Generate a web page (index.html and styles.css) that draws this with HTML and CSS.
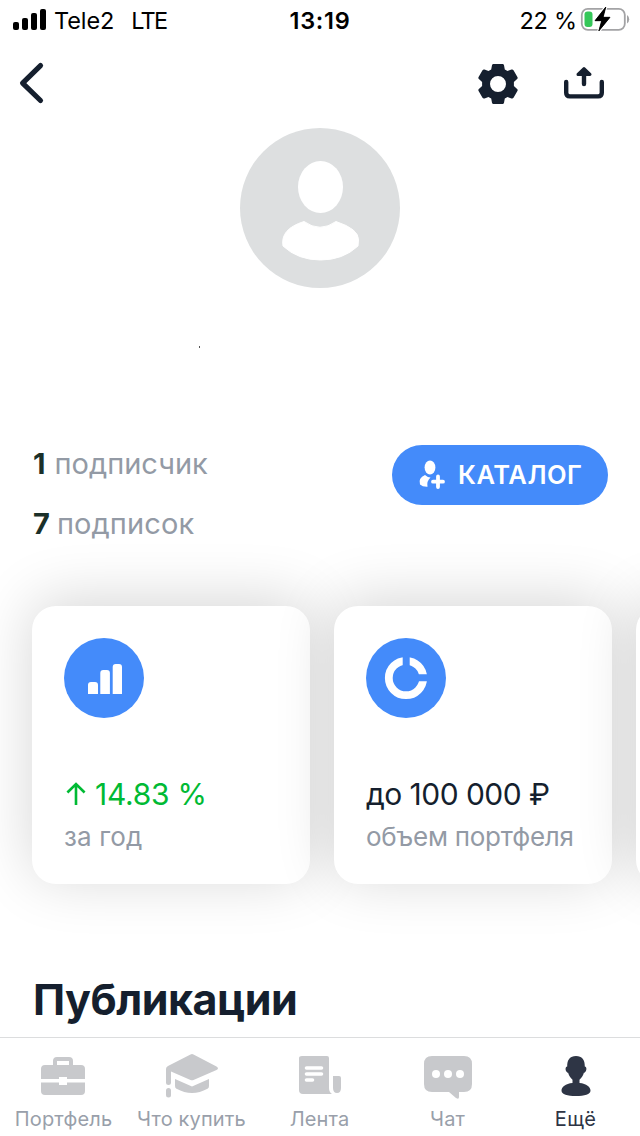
FILE: index.html
```html
<!DOCTYPE html>
<html lang="ru">
<head>
<meta charset="utf-8">
<title>Профиль</title>
<link rel="stylesheet" href="styles.css">
</head>
<body>
<div class="screen">
  <header class="status">
    <div class="status-left">
      <svg class="signal" width="34" height="22" viewBox="0 0 34 22"><rect x="0" y="14" width="6" height="8" rx="2"/><rect x="9" y="10" width="6" height="12" rx="2"/><rect x="18" y="5" width="6" height="17" rx="2"/><rect x="27" y="1" width="6" height="21" rx="2"/></svg>
      <span class="carrier">Tele2</span><span class="network">LTE</span>
    </div>
    <span class="time">13:19</span>
    <div class="status-right">
      <span class="percent">22 %</span>
      <svg class="battery" width="50" height="26" viewBox="0 0 50 26"><rect x="1.8" y="2.8" width="43" height="21" rx="6" fill="none" stroke="#a3a3a5" stroke-width="1.8"/><path d="M47 9q2.200 1.400 2.200 4.200T47 17.500z" fill="#a3a3a5"/><rect x="4.500" y="5.500" width="8" height="15.500" rx="3" fill="#35c759"/><path d="M25.800 1 15 14.700h6.700L18.800 25 30 11.300h-6.900z" fill="#000" stroke="#fff" stroke-width="3" paint-order="stroke" stroke-linejoin="round"/><path d="M25.800 1 15 14.700h6.700L18.800 25 30 11.300h-6.900z" fill="#000" stroke="#000" stroke-width=".8" stroke-linejoin="round"/></svg>
    </div>
  </header>
  <nav class="topbar">
    <svg width="26" height="42" viewBox="0 0 26 42" fill="none" stroke="#151f2e" stroke-width="5.200" stroke-linecap="round" stroke-linejoin="round"><path d="M21.500 3.600 3.600 21.200 21.500 38.500"/></svg>
    <div class="actions">
      <svg width="40" height="40" viewBox="0 0 40 40"><path fill="#151f2e" fill-rule="evenodd" d="M15.500 0h9q1.200 0 1.500 1.300l.8 4.100 2.700 1.500 4-1.400q1.300-.4 2 .7l3.900 6.900q.7 1.200-.3 2l-3.200 2.800v4.200l3.200 2.800q1 .8.3 2l-3.900 6.900q-.7 1.100-2 .7l-4-1.400-2.700 1.500-.8 4.100Q25.700 40 24.500 40h-9q-1.200 0-1.500-1.300l-.8-4.100-2.700-1.500-4 1.400q-1.300.4-2-.7L.6 26.900q-.7-1.200.3-2l3.200-2.800v-4.200L.9 15.100q-1-.8-.3-2l3.900-6.900q.7-1.100 2-.7l4 1.400 2.700-1.500.8-4.100Q14.300 0 15.500 0zM20 12a8 8 0 1 0 0 16 8 8 0 0 0 0-16z"/></svg>
      <svg width="42" height="34" viewBox="0 0 42 34" fill="none" stroke="#151f2e" stroke-width="4.400" stroke-linecap="round" stroke-linejoin="round"><path d="M3.200 16v10.800q0 3.600 3.600 3.600h28.400q3.600 0 3.600-3.600V16M21 18V6"/><path d="M21 2.700 27 8.400H15z" fill="#151f2e" stroke-width="3"/></svg>
    </div>
  </nav>
  <div class="avatar">
    <svg width="160" height="160" viewBox="0 0 160 160"><circle cx="80" cy="80" r="80" fill="#dddfe0"/><ellipse cx="80.500" cy="59" rx="22.500" ry="26" fill="#fff"/><path d="M64 93.500Q80 105 96 93.500 119 101 118.500 112L118 118Q103 132 80.500 132T43 118Q40 101 64 93.500z" fill="#fff" stroke="#fff" stroke-width="1" stroke-linejoin="round"/></svg>
  </div>
  <div class="name"><i class="tick"></i></div>
  <section class="social">
    <div class="counts">
      <div class="count"><b>1</b><span class="followers">подписчик</span></div>
      <div class="count"><b>7</b><span class="following">подписок</span></div>
    </div>
    <button class="catalog">
      <svg width="26" height="29" viewBox="0 0 26 29" fill="#fff"><ellipse cx="11" cy="7.500" rx="5.400" ry="7"/><path d="M6 15Q9 17.500 11.500 17.500 7.500 21 8.500 26.800 3.500 27 1 24.500 -1 18 6 15z"/><path d="M19 16.500v10.500M14 21.700h10" fill="none" stroke="#fff" stroke-width="3.800" stroke-linecap="round"/></svg>
      <span>КАТАЛОГ</span>
    </button>
  </section>
  <section class="cards">
    <article class="card">
      <svg width="80" height="80" viewBox="0 0 80 80"><circle cx="40" cy="40" r="40" fill="#448bfa"/><path d="M24 56V47q0-3 3-3h4q3 0 3 3v9zM36.300 56V35q0-3 3-3h3.600q3 0 3 3v21zM48.700 56V29q0-3 3-3h3.300q3 0 3 3v27z" fill="#fff"/></svg>
      <div class="value gain"><svg width="20" height="24" viewBox="0 0 20 24" fill="none" stroke="#00ba34" stroke-width="2.600"><path d="M10 23V2.500M1.400 10.500 10 2l8.600 8.500"/></svg><span class="gain-text">14.83 %</span></div>
      <div class="caption c1">за год</div>
    </article>
    <article class="card">
      <svg width="80" height="80" viewBox="0 0 80 80"><circle cx="40" cy="40" r="40" fill="#448bfa"/><circle cx="40" cy="40" r="17.200" fill="none" stroke="#fff" stroke-width="7.800"/><path d="M36.700 17h7v14h-7zM50 36.300h14v7H50z" fill="#448bfa"/></svg>
      <div class="value volume">до 100 000 ₽</div>
      <div class="caption c2">объем портфеля</div>
    </article>
    <article class="card"></article>
  </section>
  <h1 class="heading"><span>Публикации</span></h1>
  <footer class="tabs">
    <a class="tab t1"><svg width="46" height="50" viewBox="0 0 46 50"><path fill="#c8c9cc" fill-rule="evenodd" d="M13 18v-4q0-4 4-4h12q4 0 4 4v4h8q4 0 4 4v10H27v-2h-8v2H1V22q0-4 4-4zM17 18h12v-4H17zM1 35.500h18V38h8v-2.500h18V44q0 4-4 4H5q-4 0-4-4z"/></svg><span>Портфель</span></a>
    <a class="tab t2"><svg width="54" height="50" viewBox="0 0 54 50" fill="#c8c9cc"><path d="M25.500 7.500q1.500-.8 3 0L51.500 19.500q3 1.800 0 3.600L28.500 33q-1.500.7-3 0L6 24.500V36q0 2-2.500 2T1 36V22q0-2 2-3zM10 32l17 7.500L44 32v7q0 2-1.500 2.800-15.500 8.500-31 0Q10 41 10 39z"/><rect x="1" y="41" width="5" height="9.500" rx="2.500"/></svg><span>Что купить</span></a>
    <a class="tab t3"><svg width="44" height="50" viewBox="0 0 44 50"><path d="M4 9h25q2 0 2 2v30q0 4 3 6H5q-4 0-4-4V11q0-2 3-2z" fill="#c8c9cc"/><path d="M35 29h6q2 0 2 2v10q0 5-4 5t-4-5z" fill="#c8c9cc"/><path d="M8.500 21h15M8.500 27h15M8.500 33h6" fill="none" stroke="#fff" stroke-width="3.600" stroke-linecap="round"/></svg><span>Лента</span></a>
    <a class="tab t4"><svg width="48" height="50" viewBox="0 0 48 50"><path d="M8 9h32q8 0 8 8v20q0 8-8 8h-5v5q0 3-3 1l-7-6H8q-8 0-8-8V17q0-8 8-8z" fill="#c8c9cc"/><g fill="#fff"><circle cx="12" cy="27" r="4"/><circle cx="24" cy="27" r="4"/><circle cx="36" cy="27" r="4"/></g></svg><span>Чат</span></a>
    <a class="tab t5 active"><svg width="30" height="50" viewBox="0 0 30 50"><path d="M15 9c6 0 9 4 8.800 10.500 2.200.5 1.800 3.500.8 5-.5 1-1.200 1.300-1.700 1.300-1 3.200-2.400 5.200-4.400 7v3.200c7 .5 11 4 11 7.500 0 4-6 5.500-14.500 5.500S.5 47.500.5 43.500c0-3.500 4-7 11-7.500v-3.200c-2-1.800-3.400-3.800-4.400-7-.5 0-1.200-.3-1.700-1.300-1-1.500-1.400-4.500.8-5C6 13 9 9 15 9z" fill="#2e3545"/></svg><span>Ещё</span></a>
  </footer>
</div>
</body>
</html>
```
FILE: styles.css
```css
* { box-sizing: border-box; }
body { margin: 0; background: #fff; font-family: Inter, "Noto Sans", sans-serif; }
svg { display: block; flex: none; overflow: visible; }
.screen { width: 640px; height: 1136px; overflow: hidden; background: #fff; display: flex; flex-direction: column; }
.status { height: 42px; flex: none; display: grid; grid-template-columns: 1fr auto 1fr; padding: 0 10px 0 13px; font-size: 23.500px; line-height: 42px; color: #000; white-space: nowrap; }
.status-left { display: flex; }
.signal { margin: 8px 7px 0 0; }
.carrier { letter-spacing: -.1px; }
.network { margin-left: 17px; letter-spacing: -1.700px; }
.time { font-weight: 600; letter-spacing: .7px; margin-right: 3px; }
.status-right { display: flex; justify-content: flex-end; }
.percent { letter-spacing: -.2px; }
.battery { margin: 6px 0 0 3px; }
.topbar { height: 86px; flex: none; display: flex; justify-content: space-between; padding: 20px 35px 0 19px; }
.actions { display: flex; gap: 45px; padding-top: 2px; }
.actions svg + svg { margin-top: 2px; }
.avatar { height: 160px; flex: none; display: flex; justify-content: center; }
.name { height: 157px; flex: none; padding: 58px 0 0 199px; }
.tick { display: block; width: 1px; height: 2px; background: #555; }
.social { height: 161px; flex: none; display: flex; justify-content: space-between; padding: 0 32px 0 33px; }
.count { display: flex; height: 60px; line-height: 38px; font-size: 29px; color: #939aa5; }
.count b { color: #1b3029; margin-right: 7px; }
.followers { margin-left: 2px; letter-spacing: 0; }
.following { letter-spacing: .1px; }
.catalog { width: 216px; height: 60px; border: 0; border-radius: 30px; background: #448bfa; color: #fff; display: flex; align-items: center; padding: 0 0 1px 27px; font: 600 25.500px Inter, sans-serif; letter-spacing: .5px; }
.catalog span { margin-left: 13px; }
.cards { height: 278px; flex: none; display: flex; gap: 24px; padding-left: 32px; }
.card { width: 278px; height: 278px; flex: none; padding: 32px; border-radius: 24px; background: #fff; box-shadow: 0 -6px 60px rgba(0,0,0,.165); white-space: nowrap; }
.value { margin-top: 55px; height: 42px; line-height: 40px; font-size: 30px; display: flex; align-items: center; color: #151f2e; }
.gain { color: #00ba34; }
.gain svg { margin: 0 9px 0 2px; }
.gain-text { letter-spacing: -.25px; }
.volume { letter-spacing: -.55px; }
.caption { height: 40px; line-height: 43px; font-size: 26px; color: #939aa5; }
.c1 { letter-spacing: .15px; }
.c2 { letter-spacing: -.25px; }
.heading { margin: 0; height: 153px; flex: none; padding: 88px 0 0 33px; line-height: 54px; font-size: 43px; font-weight: 700; color: #151f2e; letter-spacing: -.5px; }
.tabs { height: 99px; flex: none; border-top: 1px solid #dcddde; background: #fff; display: grid; grid-template-columns: repeat(5, 128px); }
.tab { display: flex; flex-direction: column; align-items: center; padding-top: 9px; height: 98px; color: #999faa; font-size: 20px; white-space: nowrap; }
.tab span { line-height: 24px; margin-top: 10px; letter-spacing: .15px; padding-right: 1px; }
.t1 svg { margin-right: 2px; }
.t5 span { letter-spacing: .4px; }
.active { color: #2e3545; }
```
